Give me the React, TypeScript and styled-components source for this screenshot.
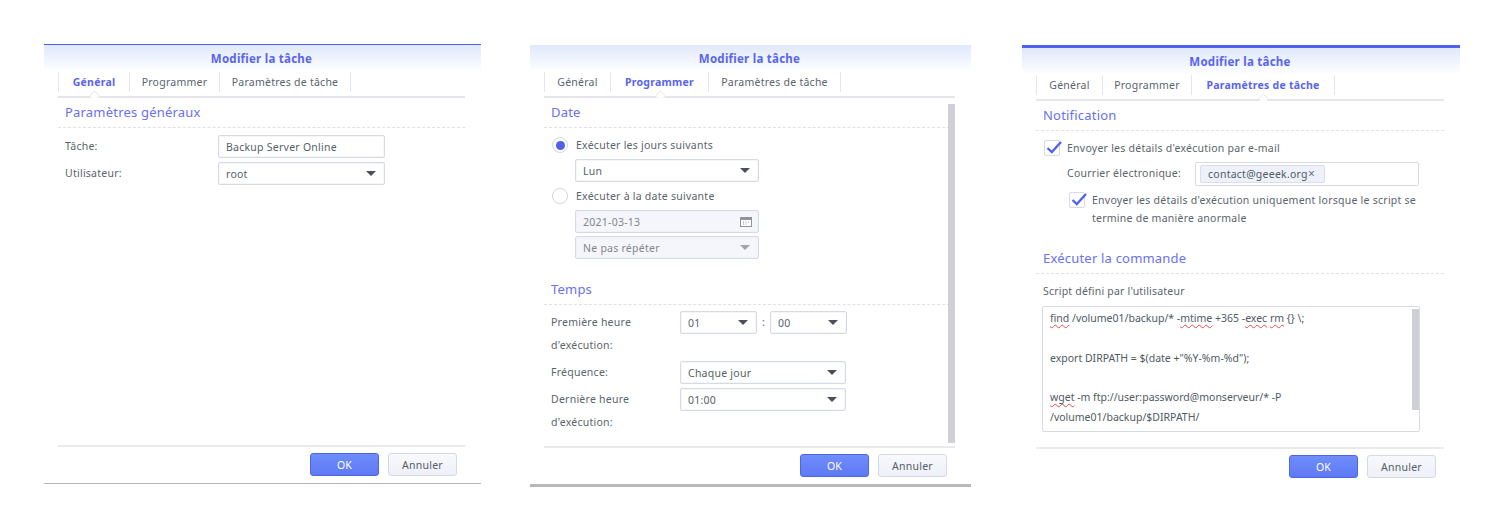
import React from "react";
import styled, { createGlobalStyle } from "styled-components";

const Global = createGlobalStyle`
  html, body { margin: 0; padding: 0; background: #fff; }
  body { font-family: "Noto Sans", "Open Sans", sans-serif; font-size: 11px; color: #4f5a63; }
  * { box-sizing: border-box; }
`;

const Page = styled.div`
  width: 1500px; height: 529px; overflow: hidden;
  display: flex; align-items: flex-start;
  padding: 44px 0 0 44px;
`;

const Win = styled.section<{ $w: number; $h: number; $mt: number; $ml: number; $top: number; $bottom: string }>`
  width: ${p => p.$w}px; height: ${p => p.$h}px;
  margin: ${p => p.$mt}px 0 0 ${p => p.$ml}px;
  border-top: ${p => p.$top}px solid #4f60ec;
  border-bottom: ${p => p.$bottom};
  display: flex; flex-direction: column; background: #fff;
  background-image: linear-gradient(#dfe8fb 0, #fff 27px);
  background-repeat: no-repeat;
  padding: 0 16px 0 14px;
`;

const Title = styled.h2`
  margin: 0; height: 27px; line-height: 27px; text-align: center;
  font-size: 11.5px; font-weight: 700; color: #5964ee;
  letter-spacing: 0.25px;
`;

const TabBar = styled.div`
  display: flex; height: 26px; padding-bottom: 5px; border-bottom: 2px solid #e4e6ea; position: relative;
`;

const Tab = styled.div<{ $w: number; $on?: boolean }>`
  width: ${p => p.$w}px; height: 20px; line-height: 20px; text-align: center;
  border-right: 1px solid #e4e6ea; font-size: 10.5px; letter-spacing: 0.25px;
  font-weight: ${p => (p.$on ? 700 : 400)}; color: ${p => (p.$on ? "#5964ee" : "#5a646c")};
  position: relative;
  &:first-child { border-left: 1px solid #e4e6ea; }
  ${p => p.$on ? `&::after {
    content: ""; position: absolute; left: 50%; bottom: -8px; width: 8px; height: 8px; margin-left: -4px;
    background: #fff; border-top: 1px solid #e4e6ea; border-left: 1px solid #e4e6ea;
    transform: rotate(45deg) scale(.8);
  }` : ""}
`;

const Body = styled.div`
  flex: 1; position: relative; min-height: 0;
`;

const Heading = styled.h3<{ $mt?: number }>`
  margin: ${p => p.$mt ?? 0}px 0 0; padding: 0 0 4px 7px; height: 30px; line-height: 24px; display: block;
  font-size: 13px; font-weight: 400; color: #6a70f2; letter-spacing: 0.2px;
  border-bottom: 1px dashed #dfe1e6;
  padding-top: 2px;
`;

const Row = styled.div<{ $ml?: number; $mt?: number; $labelW?: number }>`
  display: flex; align-items: flex-start;
  margin: ${p => p.$mt ?? 0}px 0 0 ${p => p.$ml ?? 7}px;
`;

const Label = styled.div<{ $w: number }>`
  width: ${p => p.$w}px; flex: none; font-size: 10.5px; letter-spacing: 0.25px; line-height: 23px; color: #5a646c;
`;

const Field = styled.div<{ $w: number; $off?: boolean }>`
  width: ${p => p.$w}px; height: 23px; flex: none; padding: 0 7px;
  display: flex; align-items: center; justify-content: space-between;
  font-size: 10.5px; letter-spacing: 0.25px;
  color: ${p => (p.$off ? "#7f868d" : "#555f67")};
  background: ${p => (p.$off ? "#f5f6fb" : "#fff")};
  border: 1px solid #d6dae6; border-radius: 2px;
  box-shadow: inset 0 0 0 .5px #eceef4;
`;

const Caret = styled.span<{ $off?: boolean }>`
  width: 0; height: 0; margin-right: 1px;
  border-left: 5px solid transparent; border-right: 5px solid transparent;
  border-top: 5px solid ${p => (p.$off ? "#a0a4ad" : "#4a4f5a")};
`;

const Colon = styled.span`
  width: 13px; flex: none; text-align: center; line-height: 22px; font-size: 11px; color: #5a646c;
`;

const Radio = styled.span<{ $on?: boolean }>`
  width: 16px; height: 16px; flex: none; border-radius: 50%; border: 1px solid #d3d6e4; background: #fff;
  display: flex; align-items: center; justify-content: center;
  &::after { content: ""; width: 9px; height: 9px; border-radius: 50%; background: ${p => (p.$on ? "#4f60ec" : "transparent")}; }
`;

const Option = styled.div<{ $mt?: number; $ml?: number; $gap?: number }>`
  display: flex; align-items: center; gap: ${p => p.$gap ?? 8}px;
  margin: ${p => p.$mt ?? 0}px 0 0 ${p => p.$ml ?? 8}px;
  font-size: 10.5px; letter-spacing: 0.25px; color: #5a646c;
`;

const Indented = styled.div<{ $mt: number }>`
  margin: ${p => p.$mt}px 0 0 31px;
`;

const Check = styled.span`
  width: 16px; height: 16px; flex: none; border: 1px solid #d6dae6; border-radius: 2px; background: #fff;
  position: relative; display: block;
`;

const CheckMark = styled.svg`
  position: absolute; left: 1px; top: -1px; width: 16px; height: 15px;
`;

const TagField = styled.div`
  width: 224px; height: 24px; flex: none; padding: 2px 4px; border: 1px solid #d6dae6; border-radius: 2px; background: #fff;
`;

const Tag = styled.span`
  display: flex; align-items: center; justify-content: space-between;
  width: 125px; height: 18px; padding: 0 9px 0 7px;
  background: #eef1fa; border: 1px solid #d9deee; border-radius: 2px;
  font-size: 10.5px; letter-spacing: 0.25px; color: #4f5a63;
`;

const TagClose = styled.span`
  font-size: 12px; line-height: 1; color: #6b737c;
`;

const Wrapped = styled.div`
  width: 345px; font-size: 10.5px; letter-spacing: 0.25px; line-height: 18px; color: #5a646c;
`;

const ScriptLabel = styled.div`
  margin: 9px 0 0 7px; font-size: 10.5px; letter-spacing: 0.2px; line-height: 16px; color: #5a646c;
`;

const ScriptBox = styled.div`
  position: relative; width: 378px; height: 126px; margin: 7px 0 0 6px; padding: 2px 7px;
  border: 1px solid #d6dae6; border-radius: 2px;
  font-size: 10.5px; line-height: 19.8px; color: #4f5a63;
`;

const Bad = styled.span`
  text-decoration: underline wavy #e05050 1px; text-underline-offset: 2px;
`;

const ScriptLine = styled.div`
  height: 19.8px; white-space: nowrap;
`;

const ScrollThumb = styled.div<{ $top: number; $right: number; $h: number }>`
  position: absolute; top: ${p => p.$top}px; right: ${p => p.$right}px;
  width: 7px; height: ${p => p.$h}px; background: #cfd0d4;
`;

const Footer = styled.footer`
  height: 38px; flex: none; border-top: 2px solid #e9eaec; padding: 6px 8px 0 0;
  display: flex; justify-content: flex-end; gap: 9px;
`;

const Btn = styled.button<{ $primary?: boolean }>`
  width: 69px; height: 23px; padding: 0; border-radius: 3px; font-family: inherit; font-size: 10.5px; letter-spacing: 0.25px;
  border: 1px solid ${p => (p.$primary ? "#4a66e0" : "#d5d9e6")};
  color: ${p => (p.$primary ? "#fff" : "#555f67")};
  background: ${p => (p.$primary ? "linear-gradient(#6f8dfb,#5f79f4)" : "linear-gradient(#f8f9fd,#eef0f8)")};
`;

const Icon = styled.svg`
  width: 12px; height: 10px; flex: none; margin-right: -1px;
`;

const Mark = () => (
  <CheckMark viewBox="0 0 16 15">
    <path d="M1.5 8 L5.8 12 L15 2" fill="none" stroke="#4f60ec" strokeWidth="2.3" />
  </CheckMark>
);

const Tabs = ({ w, active }: { w: number[]; active: number }) => (
  <TabBar>
    {["Général", "Programmer", "Paramètres de tâche"].map((t, i) => (
      <Tab key={t} $w={w[i]} $on={i === active}>{t}</Tab>
    ))}
  </TabBar>
);

const Actions = () => (
  <Footer>
    <Btn $primary>OK</Btn>
    <Btn>Annuler</Btn>
  </Footer>
);

const Select = ({ w, v, off }: { w: number; v: string; off?: boolean }) => (
  <Field $w={w} $off={off}>{v}<Caret $off={off} /></Field>
);

export default function App() {
  return (
    <Page>
      <Global />
      <Win $w={437} $h={440} $mt={0} $ml={0} $top={1} $bottom="1px solid #b4b4b4">
        <Title>Modifier la tâche</Title>
        <Tabs w={[72, 90, 131]} active={0} />
        <Body>
          <Heading>Paramètres généraux</Heading>
          <Row $mt={7}>
            <Label $w={153}>Tâche:</Label>
            <Field $w={167}>Backup Server Online</Field>
          </Row>
          <Row $mt={4}>
            <Label $w={153}>Utilisateur:</Label>
            <Select w={167} v="root" />
          </Row>
        </Body>
        <Actions />
      </Win>

      <Win $w={441} $h={442} $mt={1} $ml={49} $top={0} $bottom="3px solid #b8b8b8">
        <Title>Modifier la tâche</Title>
        <Tabs w={[67, 98, 132]} active={1} />
        <Body>
          <ScrollThumb $top={6} $right={0} $h={339} />
          <Heading>Date</Heading>
          <Option $mt={9}><Radio $on />Exécuter les jours suivants</Option>
          <Indented $mt={6}><Select w={184} v="Lun" /></Indented>
          <Option $mt={6}><Radio />Exécuter à la date suivante</Option>
          <Indented $mt={6}>
            <Field $w={184} $off>2021-03-13
              <Icon viewBox="0 0 12 10">
                <rect x="0.5" y="0.5" width="11" height="9" fill="#fff" stroke="#8f939c" />
                <rect x="0.5" y="0.5" width="11" height="2.5" fill="#8f939c" />
                <path d="M3 5h1M5.5 5h1M8 5h1M5.5 7h1M3 7h1" stroke="#8f939c" />
              </Icon>
            </Field>
          </Indented>
          <Indented $mt={3}><Select w={184} v="Ne pas répéter" off /></Indented>
          <Heading $mt={16}>Temps</Heading>
          <Row $mt={6}>
            <Label $w={129}>Première heure d'exécution:</Label>
            <Select w={77} v="01" />
            <Colon>:</Colon>
            <Select w={77} v="00" />
          </Row>
          <Row $mt={4}>
            <Label $w={129}>Fréquence:</Label>
            <Select w={166} v="Chaque jour" />
          </Row>
          <Row $mt={4}>
            <Label $w={129}>Dernière heure d'exécution:</Label>
            <Select w={166} v="01:00" />
          </Row>
        </Body>
        <Actions />
      </Win>

      <Win $w={438} $h={440} $mt={1} $ml={51} $top={3} $bottom="0 none">
        <Title>Modifier la tâche</Title>
        <Tabs w={[67, 89, 143]} active={2} />
        <Body>
          <Heading>Notification</Heading>
          <Option $mt={9} $gap={7}><Check><Mark /></Check>Envoyer les détails d'exécution par e-mail</Option>
          <Row $ml={31} $mt={6}>
            <Label $w={128}>Courrier électronique:</Label>
            <TagField><Tag>contact@geeek.org<TagClose>×</TagClose></Tag></TagField>
          </Row>
          <Option $mt={5} $ml={33} $gap={7}><Check><Mark /></Check><Wrapped>Envoyer les détails d'exécution uniquement lorsque le script se</Wrapped></Option>
          <Wrapped style={{ marginLeft: 56 }}>termine de manière anormale</Wrapped>
          <Heading $mt={17}>Exécuter la commande</Heading>
          <ScriptLabel>Script défini par l'utilisateur</ScriptLabel>
          <ScriptBox>
            <ScrollThumb $top={2} $right={0} $h={101} />
            <ScriptLine><Bad>find</Bad> /volume01/backup/* -<Bad>mtime</Bad> +365 -<Bad>exec</Bad> <Bad>rm</Bad> {"{}"} \;</ScriptLine>
            <ScriptLine />
            <ScriptLine>export DIRPATH = $(date +"%Y-%m-%d");</ScriptLine>
            <ScriptLine />
            <ScriptLine><Bad>wget</Bad> -m ftp://user:password@monserveur/* -P</ScriptLine>
            <ScriptLine>/volume01/backup/$DIRPATH/</ScriptLine>
          </ScriptBox>
        </Body>
        <Actions />
      </Win>
    </Page>
  );
}
